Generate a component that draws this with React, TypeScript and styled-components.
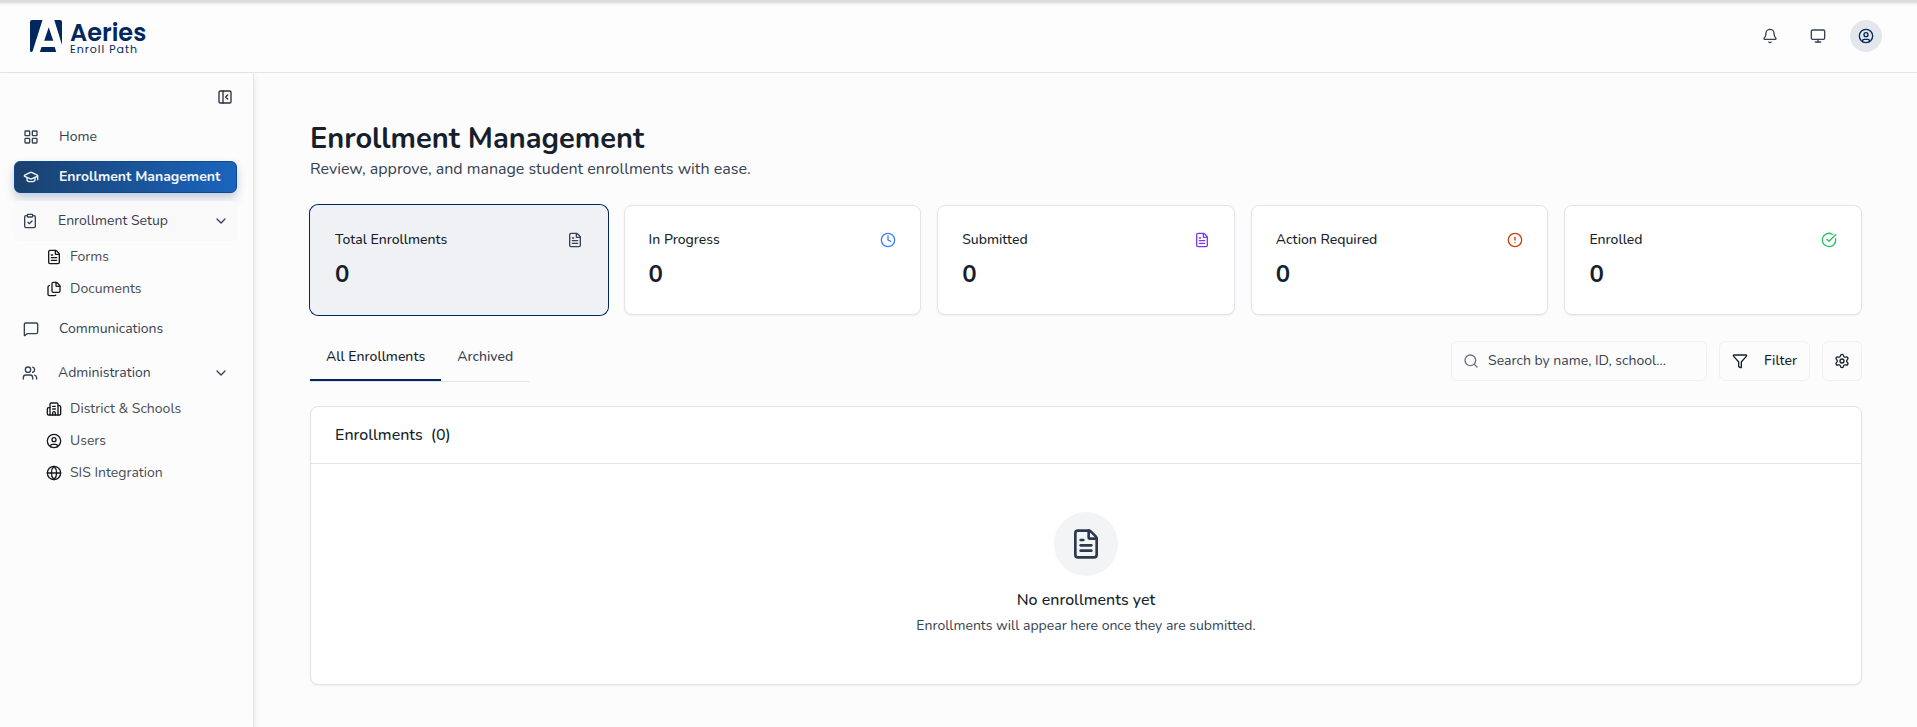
import React from "react";
import styled, { createGlobalStyle, css } from "styled-components";
import {
  Bell,
  Building2,
  ChevronDown,
  CircleAlert,
  CircleCheckBig,
  CircleUser,
  ClipboardCheck,
  Clock,
  FileText,
  Files,
  Funnel,
  Globe,
  GraduationCap,
  LayoutGrid,
  LucideIcon,
  MessageSquare,
  Monitor,
  PanelLeftClose,
  Search,
  Settings,
  Users,
} from "lucide-react";

const navy = "#00285e";
const ink = "#171f2c";
const slate = "#364153";
const line = "#e2e4e9";

const GlobalStyle = createGlobalStyle`
  *, *::before, *::after { box-sizing: border-box; }
  body {
    margin: 0;
    background: #fcfcfc;
    color: ${ink};
    font-family: Nunito, "Nunito Sans", "Open Sans", sans-serif;
    font-size: 14px;
    line-height: 20px;
  }
  h1, h2, h3, p { margin: 0; }
  button, input { font: inherit; color: inherit; }
  button { cursor: pointer; }
  a { color: inherit; text-decoration: none; }
  svg { flex-shrink: 0; display: block; }
`;

const Shell = styled.div`
  display: flex;
  flex-direction: column;
  min-height: 100vh;
`;

const Header = styled.header`
  display: flex;
  align-items: center;
  justify-content: space-between;
  height: 73px;
  padding: 0 35px 0 30px;
  background: linear-gradient(#dcdedd 0, #dcdedd 2px, #f3f3f3 4px, #fdfdfd 6px);
  border-bottom: 1px solid ${line};
`;

const Brand = styled.a`
  display: flex;
  align-items: center;
  gap: 8px;
  color: ${navy};
`;

const BrandText = styled.span`
  display: flex;
  flex-direction: column;
  padding-top: 2px;
`;

const BrandName = styled.span`
  font-family: Poppins, Nunito, sans-serif;
  font-size: 24px;
  font-weight: 600;
  line-height: 24px;
`;

const BrandProduct = styled.span`
  font-family: Poppins, Nunito, sans-serif;
  font-size: 11px;
  font-weight: 400;
  line-height: 8px;
  letter-spacing: 1px;
`;

const HeaderActions = styled.div`
  display: flex;
  gap: 16px;
`;

const RoundButton = styled.button<{ $filled?: boolean }>`
  display: grid;
  place-items: center;
  width: 32px;
  height: 32px;
  padding: 0;
  border: 0;
  border-radius: 50%;
  background: ${(p) => (p.$filled ? "#e3e7ec" : "transparent")};
  color: ${(p) => (p.$filled ? navy : slate)};
`;

const Body = styled.div`
  display: flex;
  flex: 1;
`;

const Sidebar = styled.aside`
  flex: 0 0 254px;
  padding: 8px 16px 16px 14px;
  background: #fcfcfc;
  border-right: 1px solid ${line};
  box-shadow: 2px 4px 6px rgba(0, 0, 0, 0.06);
`;

const SidebarTop = styled.div`
  display: flex;
  justify-content: flex-end;
  margin-bottom: 8px;
  padding-right: 4px;
`;

const CollapseButton = styled.button`
  display: grid;
  place-items: center;
  width: 16px;
  height: 32px;
  padding: 0;
  border: 0;
  background: none;
  color: #2a303b;
`;

const Nav = styled.nav`
  display: flex;
  flex-direction: column;
  gap: 8px;
`;

const NavLink = styled.a<{ $active?: boolean }>`
  display: flex;
  align-items: center;
  gap: 20px;
  height: 32px;
  padding: 0 8px;
  border: 1px solid transparent;
  border-radius: 6px;
  color: ${slate};
  ${(p) =>
    p.$active &&
    css`
      border-color: #10478f;
      background: linear-gradient(90deg, #1a416e, #1a64be);
      color: #f3f6fa;
      font-weight: 700;
      box-shadow: 0 5px 10px rgba(22, 62, 120, 0.25);
    `}
`;

const NavGroup = styled.div`
  display: flex;
  flex-direction: column;
`;

const GroupButton = styled.button<{ $tinted?: boolean }>`
  display: flex;
  align-items: center;
  gap: 20px;
  height: 40px;
  padding: 0 8px;
  border: 0;
  border-radius: 6px;
  background: ${(p) => (p.$tinted ? "#f9f9fa" : "transparent")};
  color: ${slate};
  text-align: left;
`;

const GroupLabel = styled.span`
  flex: 1;
`;

const SubLink = styled.a`
  display: flex;
  align-items: center;
  gap: 8px;
  height: 32px;
  padding-left: 32px;
  color: #484c55;

  svg {
    color: #17191d;
  }
`;

const Main = styled.main`
  flex: 1;
  min-width: 0;
  padding: 48px 55px 42px 56px;
`;

const Title = styled.h1`
  font-size: 29px;
  font-weight: 700;
  line-height: 36px;
`;

const Subtitle = styled.p`
  color: ${slate};
  font-size: 16px;
  line-height: 24px;
`;

const Stats = styled.div`
  display: grid;
  grid-template-columns: repeat(5, 1fr);
  gap: 16px;
  margin: 24px 0;
`;

const StatCard = styled.button<{ $selected?: boolean }>`
  display: flex;
  flex-direction: column;
  gap: 8px;
  padding: 24px;
  border: 1px solid ${(p) => (p.$selected ? "#eff1f5" : line)};
  border-radius: 8px;
  background: ${(p) => (p.$selected ? "#eff1f5" : "#fff")};
  box-shadow: ${(p) => (p.$selected ? `0 0 0 1px ${navy}` : "0 1px 2px rgba(0, 0, 0, 0.06)")};
  text-align: left;
`;

const StatHead = styled.span<{ $tone: string }>`
  display: flex;
  align-items: center;
  justify-content: space-between;
  width: 100%;
  font-weight: 500;

  svg {
    color: ${(p) => p.$tone};
  }
`;

const StatValue = styled.span`
  font-size: 24px;
  font-weight: 700;
  line-height: 32px;
`;

const Toolbar = styled.div`
  display: flex;
  align-items: center;
  justify-content: space-between;
  margin: 25px 0 24px;
`;

const Tabs = styled.div`
  display: flex;
  border-bottom: 1px solid ${line};
`;

const Tab = styled.button<{ $active?: boolean }>`
  padding: 7px 16px 12px;
  border: 0;
  border-bottom: 2px solid ${(p) => (p.$active ? navy : "transparent")};
  background: none;
  color: ${(p) => (p.$active ? ink : slate)};
  font-weight: 500;
`;

const Tools = styled.div`
  display: flex;
  gap: 12px;
`;

const SearchBox = styled.label`
  display: flex;
  align-items: center;
  gap: 9px;
  width: 256px;
  height: 40px;
  padding: 0 11px;
  border: 1px solid #f0f1f2;
  border-radius: 6px;
  color: #6c727d;
`;

const SearchInput = styled.input`
  flex: 1;
  min-width: 0;
  padding: 0;
  border: 0;
  outline: 0;
  background: none;
  color: ${ink};

  &::placeholder {
    color: ${slate};
    opacity: 1;
  }
`;

const ToolButton = styled.button`
  display: flex;
  align-items: center;
  justify-content: center;
  gap: 16px;
  height: 40px;
  padding: 0 12px;
  border: 1px solid #f0f1f2;
  border-radius: 6px;
  background: none;
  font-weight: 500;
`;

const IconToolButton = styled(ToolButton)`
  width: 40px;
  padding: 0;
`;

const Panel = styled.section`
  border: 1px solid ${line};
  border-radius: 8px;
  background: #fff;
  box-shadow: 0 1px 2px rgba(0, 0, 0, 0.06);
`;

const PanelHead = styled.h2`
  display: flex;
  align-items: center;
  gap: 8px;
  height: 57px;
  padding: 0 24px;
  border-bottom: 1px solid ${line};
  font-size: 16px;
  font-weight: 500;
`;

const Empty = styled.div`
  display: flex;
  flex-direction: column;
  align-items: center;
  padding: 48px 24px;
`;

const EmptyIcon = styled.div`
  display: grid;
  place-items: center;
  width: 64px;
  height: 64px;
  margin-bottom: 12px;
  border-radius: 50%;
  background: #f3f4f6;
  color: #2d3a4e;
`;

const EmptyTitle = styled.h3`
  margin-bottom: 4px;
  font-size: 16px;
  font-weight: 500;
  line-height: 24px;
`;

const EmptyText = styled.p`
  color: ${slate};
`;

const LogoMark = () => (
  <svg width="32" height="32" viewBox="0 0 32 32" fill="currentColor" aria-hidden="true">
    <path d="M2 0H12.5L2.5 31.6Q1.8 32 1.3 32Q0 32 0 30.5V2Q0 0 2 0Z" />
    <path d="M24.3 0H30Q32 0 32 2V25Z" />
    <path d="M18.7 7.3L23.3 20.7H14.2Z" />
    <path d="M11.5 27H24.7L26.2 32H9.9Z" />
  </svg>
);

type Group = { label: string; icon: LucideIcon; tinted?: boolean; items: { label: string; icon: LucideIcon }[] };

const setup: Group = {
  label: "Enrollment Setup",
  icon: ClipboardCheck,
  tinted: true,
  items: [
    { label: "Forms", icon: FileText },
    { label: "Documents", icon: Files },
  ],
};

const administration: Group = {
  label: "Administration",
  icon: Users,
  items: [
    { label: "District & Schools", icon: Building2 },
    { label: "Users", icon: CircleUser },
    { label: "SIS Integration", icon: Globe },
  ],
};

const stats = [
  { label: "Total Enrollments", icon: FileText, tone: slate, selected: true },
  { label: "In Progress", icon: Clock, tone: "#3b82f6" },
  { label: "Submitted", icon: FileText, tone: "#7c3aed" },
  { label: "Action Required", icon: CircleAlert, tone: "#c9400e" },
  { label: "Enrolled", icon: CircleCheckBig, tone: "#22c55e" },
];

const NavSection = ({ label, icon: Icon, tinted, items }: Group) => (
  <NavGroup>
    <GroupButton type="button" aria-expanded="true" $tinted={tinted}>
      <Icon size={16} />
      <GroupLabel>{label}</GroupLabel>
      <ChevronDown size={16} />
    </GroupButton>
    {items.map(({ label: text, icon: ItemIcon }) => (
      <SubLink href="#" key={text}>
        <ItemIcon size={16} />
        {text}
      </SubLink>
    ))}
  </NavGroup>
);

export default function App() {
  return (
    <Shell>
      <GlobalStyle />
      <Header>
        <Brand href="#">
          <LogoMark />
          <BrandText>
            <BrandName>Aeries</BrandName>
            <BrandProduct>Enroll Path</BrandProduct>
          </BrandText>
        </Brand>
        <HeaderActions>
          <RoundButton type="button" aria-label="Notifications">
            <Bell size={16} />
          </RoundButton>
          <RoundButton type="button" aria-label="Display">
            <Monitor size={16} />
          </RoundButton>
          <RoundButton type="button" aria-label="Account" $filled>
            <CircleUser size={16} />
          </RoundButton>
        </HeaderActions>
      </Header>
      <Body>
        <Sidebar>
          <SidebarTop>
            <CollapseButton type="button" aria-label="Collapse sidebar">
              <PanelLeftClose size={16} />
            </CollapseButton>
          </SidebarTop>
          <Nav>
            <NavLink href="#">
              <LayoutGrid size={16} />
              Home
            </NavLink>
            <NavLink href="#" $active aria-current="page">
              <GraduationCap size={16} />
              Enrollment Management
            </NavLink>
            <NavSection {...setup} />
            <NavLink href="#">
              <MessageSquare size={16} />
              Communications
            </NavLink>
            <NavSection {...administration} />
          </Nav>
        </Sidebar>
        <Main>
          <Title>Enrollment Management</Title>
          <Subtitle>Review, approve, and manage student enrollments with ease.</Subtitle>
          <Stats>
            {stats.map(({ label, icon: Icon, tone, selected }) => (
              <StatCard type="button" key={label} $selected={selected} aria-pressed={!!selected}>
                <StatHead $tone={tone}>
                  {label}
                  <Icon size={16} />
                </StatHead>
                <StatValue>0</StatValue>
              </StatCard>
            ))}
          </Stats>
          <Toolbar>
            <Tabs role="tablist">
              <Tab type="button" role="tab" aria-selected="true" $active>
                All Enrollments
              </Tab>
              <Tab type="button" role="tab" aria-selected="false">
                Archived
              </Tab>
            </Tabs>
            <Tools>
              <SearchBox>
                <Search size={16} />
                <SearchInput
                  type="search"
                  aria-label="Search enrollments"
                  placeholder="Search by name, ID, school..."
                />
              </SearchBox>
              <ToolButton type="button">
                <Funnel size={16} />
                Filter
              </ToolButton>
              <IconToolButton type="button" aria-label="Table settings">
                <Settings size={16} />
              </IconToolButton>
            </Tools>
          </Toolbar>
          <Panel>
            <PanelHead>
              <span>Enrollments</span>
              <span>(0)</span>
            </PanelHead>
            <Empty>
              <EmptyIcon>
                <FileText size={32} />
              </EmptyIcon>
              <EmptyTitle>No enrollments yet</EmptyTitle>
              <EmptyText>Enrollments will appear here once they are submitted.</EmptyText>
            </Empty>
          </Panel>
        </Main>
      </Body>
    </Shell>
  );
}
